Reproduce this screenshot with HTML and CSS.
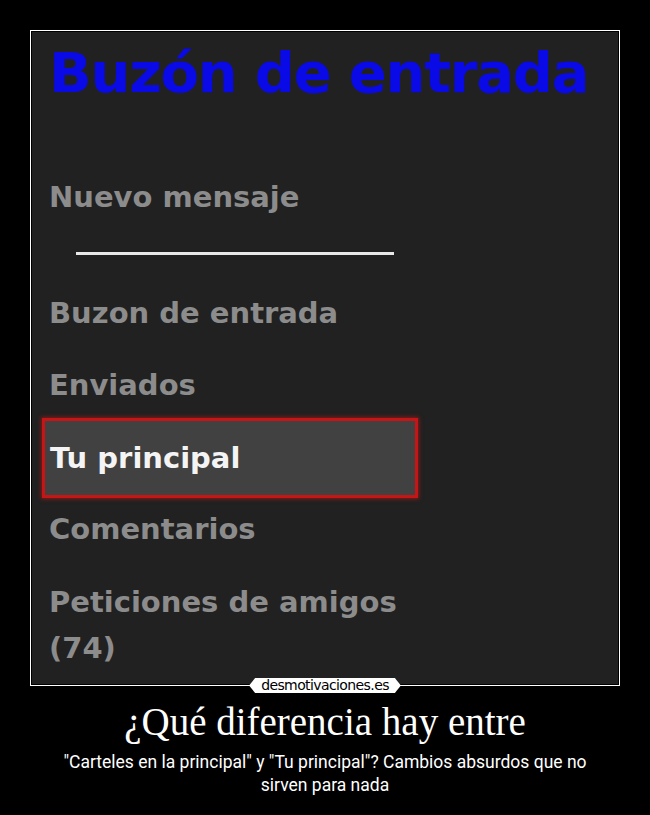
FILE: index.html
```html
<!DOCTYPE html>
<html lang="es">
<head>
    <meta charset="UTF-8">
    <meta name="viewport" content="width=device-width, initial-scale=1.0">
    <title>desmotivaciones.es</title>
    <link rel="stylesheet" href="styles.css">
</head>
<body>
    <div id="poster">
        <div id="frame">
            <div class="screen">
                <h1 class="inboxTitle">Buzón de entrada</h1>
                <ul class="menu">
                    <li class="item">Nuevo mensaje</li>
                    <li class="divider"></li>
                    <li class="item">Buzon de entrada</li>
                    <li class="item">Enviados</li>
                    <li class="item active">Tu principal</li>
                    <li class="item">Comentarios</li>
                    <li class="item tall">Peticiones de amigos<br>(74)</li>
                </ul>
            </div>
        </div>
        <div class="brand"><span>desmotivaciones.es</span></div>
        <h2 class="caption">¿Qué diferencia hay entre</h2>
        <p class="subcaption">"Carteles en la principal" y "Tu principal"? Cambios absurdos que no sirven para nada</p>
    </div>
</body>
</html>
```

FILE: styles.css
```css
body {
    margin: 0;
    background: #000;
}
#poster {
    width: 650px;
    height: 815px;
    padding-top: 30px;
    box-sizing: border-box;
}
#frame {
    width: 590px;
    height: 656px;
    margin-left: 30px;
    border: 1px solid #fff;
    box-sizing: border-box;
    padding: 1px;
    background: #000;
}
.screen {
    height: 100%;
    background: #212121;
    overflow: hidden;
    font-family: "DejaVu Sans", sans-serif;
    font-weight: bold;
}
.inboxTitle {
    margin: 0;
    padding: 3px 0 0 17px;
    font-size: 56px;
    line-height: 76px;
    color: #0a0ae6;
    letter-spacing: -1.2px;
}
.menu {
    list-style: none;
    margin: 0;
    padding: 64px 0 0 0;
}
.item {
    font-size: 29px;
    line-height: 44px;
    color: #8c8c8c;
    padding: 0 0 0 17px;
    margin-bottom: 28px;
}
.item.tall {
    margin-top: 2px;
    line-height: 46px;
}
/* white rule under "Nuevo mensaje" */
.divider {
    width: 318px;
    height: 3px;
    margin: 33px 0 36px 44px;
    background: #e8e8e8;
}
.item.active {
    box-sizing: border-box;
    width: 376px;
    margin: -17px 0 9px 10px;
    padding: 15px 0 15px 5px;
    color: #f4f4f4;
    background: #414141;
    border: 3px solid #c81414;
    box-shadow: 0 0 4px 1px rgba(200, 20, 20, 0.6);
}
.brand {
    height: 0;
    display: flex;
    justify-content: center;
    position: relative;
    top: -8px;
}
.brand span {
    height: 15px;
    padding: 0 12px;
    background: #fff;
    clip-path: polygon(6px 0, calc(100% - 6px) 0, 100% 50%, calc(100% - 6px) 100%, 6px 100%, 0 50%);
    font-family: "DejaVu Sans", sans-serif;
    font-size: 14px;
    line-height: 15px;
    letter-spacing: -0.6px;
    color: #000;
}
.caption {
    margin: 13px 0 0;
    text-align: center;
    font-family: "Liberation Serif", serif;
    font-weight: normal;
    font-size: 39px;
    line-height: 46px;
    color: #fff;
}
.subcaption {
    width: 560px;
    margin: 6px auto 0;
    text-align: center;
    font-family: Roboto, sans-serif;
    font-size: 17.5px;
    line-height: 23px;
    color: #fff;
}
```
